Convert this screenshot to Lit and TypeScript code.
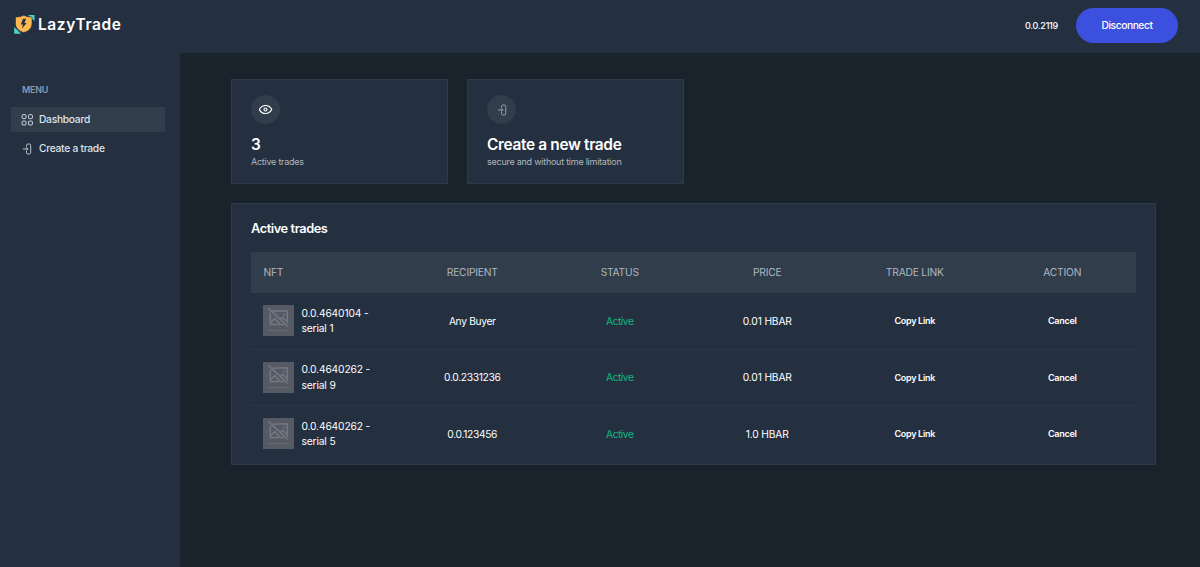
import { LitElement, html, css, svg } from "lit";
import { customElement } from "lit/decorators.js";

interface Trade {
  token: string;
  serial: number;
  recipient: string;
  price: string;
}

const TRADES: Trade[] = [
  { token: "0.0.4640104", serial: 1, recipient: "Any Buyer", price: "0.01 HBAR" },
  { token: "0.0.4640262", serial: 9, recipient: "0.0.2331236", price: "0.01 HBAR" },
  { token: "0.0.4640262", serial: 5, recipient: "0.0.123456", price: "1.0 HBAR" },
];

const enterPaths = svg`
  <path d="M5.500 3.500V2.400Q5.500 1 6.900 1h1.400Q9.700 1 9.700 2.400v7.200Q9.700 11 8.300 11H6.900Q5.500 11 5.500 9.600V8.500" />
  <path d="M2.300 6H6.800M5.400 4.600 6.800 6 5.400 7.400" />`;

const enterIcon = html`<svg class="enter" viewBox="0 0 12 12" width="12" height="12">${enterPaths}</svg>`;

const placeholder = html`<svg class="thumb" viewBox="0 0 31 31" width="31" height="31">
  <rect width="31" height="31" fill="#555a65" />
  <g fill="none" stroke="#747984" stroke-width="1.400">
    <path d="M10 6H24.300V18.500M7.300 8V19.500H21" />
    <path d="M7.500 17.800 11.700 13.500 16.500 18.500M17 14.500 19.500 12.300 24 16.500" />
    <path d="M5.500 3.500 25 21.500" stroke-width="1.700" />
  </g>
  <circle cx="21" cy="9.500" r="1.100" fill="#747984" />
  <path d="M4.500 25.500H27" stroke="#636873" stroke-width="1.200" />
</svg>`;

@customElement("app-root")
export class AppRoot extends LitElement {
  static styles = css`
    :host {
      display: flex;
      flex-direction: column;
      height: 567px;
      overflow: hidden;
      background: #1a222c;
      color: #dee4ee;
      font-family: Inter, "Liberation Sans", sans-serif;
      font-size: 10.24px;
      line-height: 15.4px;
    }
    * { box-sizing: border-box; }
    svg { display: block; flex: none; }
    .header {
      flex: none;
      display: flex;
      align-items: center;
      justify-content: space-between;
      height: 53px;
      padding: 0 22px 2px 14px;
      background: #24303f;
    }
    .brand { display: flex; align-items: center; gap: 3px; padding-bottom: 3px; }
    .name { padding-top: 2px; color: #fff; font-size: 15.500px; font-weight: 600; line-height: 20px; letter-spacing: 0.600px; }
    .account { display: flex; align-items: center; gap: 18px; }
    .wallet { color: #fff; font-size: 9px; font-weight: 500; letter-spacing: -0.260px; }
    .disconnect {
      display: flex;
      align-items: center;
      justify-content: center;
      width: 102px;
      height: 35px;
      border-radius: 18px;
      background: #3c50e0;
      color: #fff;
      font-weight: 500;
      letter-spacing: -0.430px;
    }
    .body { display: flex; flex: 1; min-height: 0; }
    .sidebar { flex: none; width: 180px; padding: 29px 15px 0 11px; background: #24303f; }
    .menu-title { padding-left: 11px; margin-bottom: 10px; color: #8a99af; font-size: 9px; font-weight: 600; letter-spacing: -0.250px; }
    .item {
      display: flex;
      align-items: center;
      gap: 6px;
      height: 25px;
      padding-left: 10px;
      margin-bottom: 4px;
      font-weight: 500;
      letter-spacing: -0.270px;
    }
    .item.on { background: #313d4a; }
    .main { flex: 1; min-width: 0; padding: 26px 44px 0 51px; }
    .cards { display: flex; gap: 19px; margin-bottom: 19px; }
    .card { width: 217px; height: 105px; padding: 15px 19px; border: 1px solid #2e3a47; background: #24303f; }
    .circle {
      display: flex;
      align-items: center;
      justify-content: center;
      width: 29px;
      height: 29px;
      margin-bottom: 11px;
      border-radius: 50%;
      background: #313d4a;
    }
    .value { color: #fff; font-size: 15.400px; font-weight: 600; line-height: 20px; letter-spacing: -0.320px; }
    .note { color: #aeb7c0; font-size: 9px; font-weight: 400; line-height: 14px; letter-spacing: -0.250px; }
    .panel { height: 262px; padding: 15px 19px 0; border: 1px solid #2e3a47; background: #24303f; }
    .panel-title { margin-bottom: 14px; color: #fff; font-size: 12.800px; font-weight: 600; line-height: 19px; letter-spacing: -0.420px; }
    .row { display: grid; grid-template-columns: repeat(6, 1fr); align-items: center; height: 56.500px; border-bottom: 1px solid #2b3744; }
    .row:last-child { border-bottom-color: transparent; }
    .row.head { height: 41px; border: 0; background: #313d4a; letter-spacing: -0.200px; }
    .cell { padding-top: 1px; text-align: center; color: #fff; }
    .head .cell { padding-top: 0; color: #aeb7c0; }
    .cell.nft { display: flex; align-items: center; gap: 7px; padding-top: 0; padding-left: 12.400px; text-align: left; }
    .token { padding-top: 1px; letter-spacing: -0.130px; }
    .cell.recipient { letter-spacing: -0.330px; }
    .cell.price { letter-spacing: -0.150px; }
    .cell.active { color: #10b981; letter-spacing: -0.500px; }
    .cell.act { padding: 0; font-size: 9px; font-weight: 600; letter-spacing: -0.300px; }
    .enter { fill: none; stroke: #dee4ee; stroke-width: 0.800; stroke-linecap: round; stroke-linejoin: round; }
    .circle .enter { stroke: #aeb7c0; }
    .grid { fill: none; stroke: #dee4ee; stroke-width: 0.900; }
    .eye { fill: none; stroke: #fff; stroke-width: 1.200; }
  `;

  render() {
    return html`
      <header class="header">
        <div class="brand">
          <svg viewBox="0 0 21 20" width="21" height="20">
            <path d="M14 1H20.500V7ZM.2 13V19.700H7Z" fill="#4fd3d0" />
            <path d="M9.800 1.200C12 2.500 15 3 18 3V9.500C18 14 15 17 9.800 18.600 4.800 17 1.500 14 1.500 9.500V3C4.500 3 7.500 2.500 9.800 1.200Z" fill="#ffb84f" stroke="#24303f" stroke-width=".6" />
            <path d="M9 4.800 6.800 10.400H9L8 14.800 12.600 8.900H10.500L12 4.800Z" fill="#24303f" />
          </svg>
          <span class="name">LazyTrade</span>
        </div>
        <div class="account">
          <span class="wallet">0.0.2119</span>
          <div class="disconnect"><span>Disconnect</span></div>
        </div>
      </header>
      <div class="body">
        <nav class="sidebar">
          <div class="menu-title">MENU</div>
          <div class="item on">
            <svg class="grid" viewBox="0 0 12 12" width="12" height="12">
              <rect x="1.100" y=".7" width="3.900" height="3.900" rx=".8" />
              <rect x="7.500" y=".7" width="3.900" height="3.900" rx=".8" />
              <rect x="1.100" y="7.100" width="3.900" height="3.900" rx=".8" />
              <rect x="7.500" y="7.100" width="3.900" height="3.900" rx=".8" />
            </svg>
            <span>Dashboard</span>
          </div>
          <div class="item">${enterIcon}<span>Create a trade</span></div>
        </nav>
        <main class="main">
          <div class="cards">
            <div class="card">
              <div class="circle">
                <svg class="eye" viewBox="0.5 0.5 14 10" width="14" height="10">
                  <path d="M.8 5C2.300 2.300 4.400 1 7 1S11.700 2.300 13.200 5C11.700 7.700 9.600 9 7 9S2.300 7.700.8 5Z" />
                  <circle cx="7" cy="5" r="1.500" />
                </svg>
              </div>
              <div class="value">3</div>
              <div class="note">Active trades</div>
            </div>
            <div class="card">
              <div class="circle">${enterIcon}</div>
              <div class="value">Create a new trade</div>
              <div class="note">secure and without time limitation</div>
            </div>
          </div>
          <section class="panel">
            <div class="panel-title">Active trades</div>
            <div class="row head">
              <div class="cell nft">NFT</div>
              ${["RECIPIENT", "STATUS", "PRICE", "TRADE LINK", "ACTION"].map((t) => html`<div class="cell">${t}</div>`)}
            </div>
            ${TRADES.map(
              (t) => html`<div class="row">
                <div class="cell nft">${placeholder}<div class="token">${t.token} -<br />serial ${t.serial}</div></div>
                <div class="cell recipient">${t.recipient}</div>
                <div class="cell active">Active</div>
                <div class="cell price">${t.price}</div>
                <div class="cell act">Copy Link</div>
                <div class="cell act">Cancel</div>
              </div>`
            )}
          </section>
        </main>
      </div>
    `;
  }
}
